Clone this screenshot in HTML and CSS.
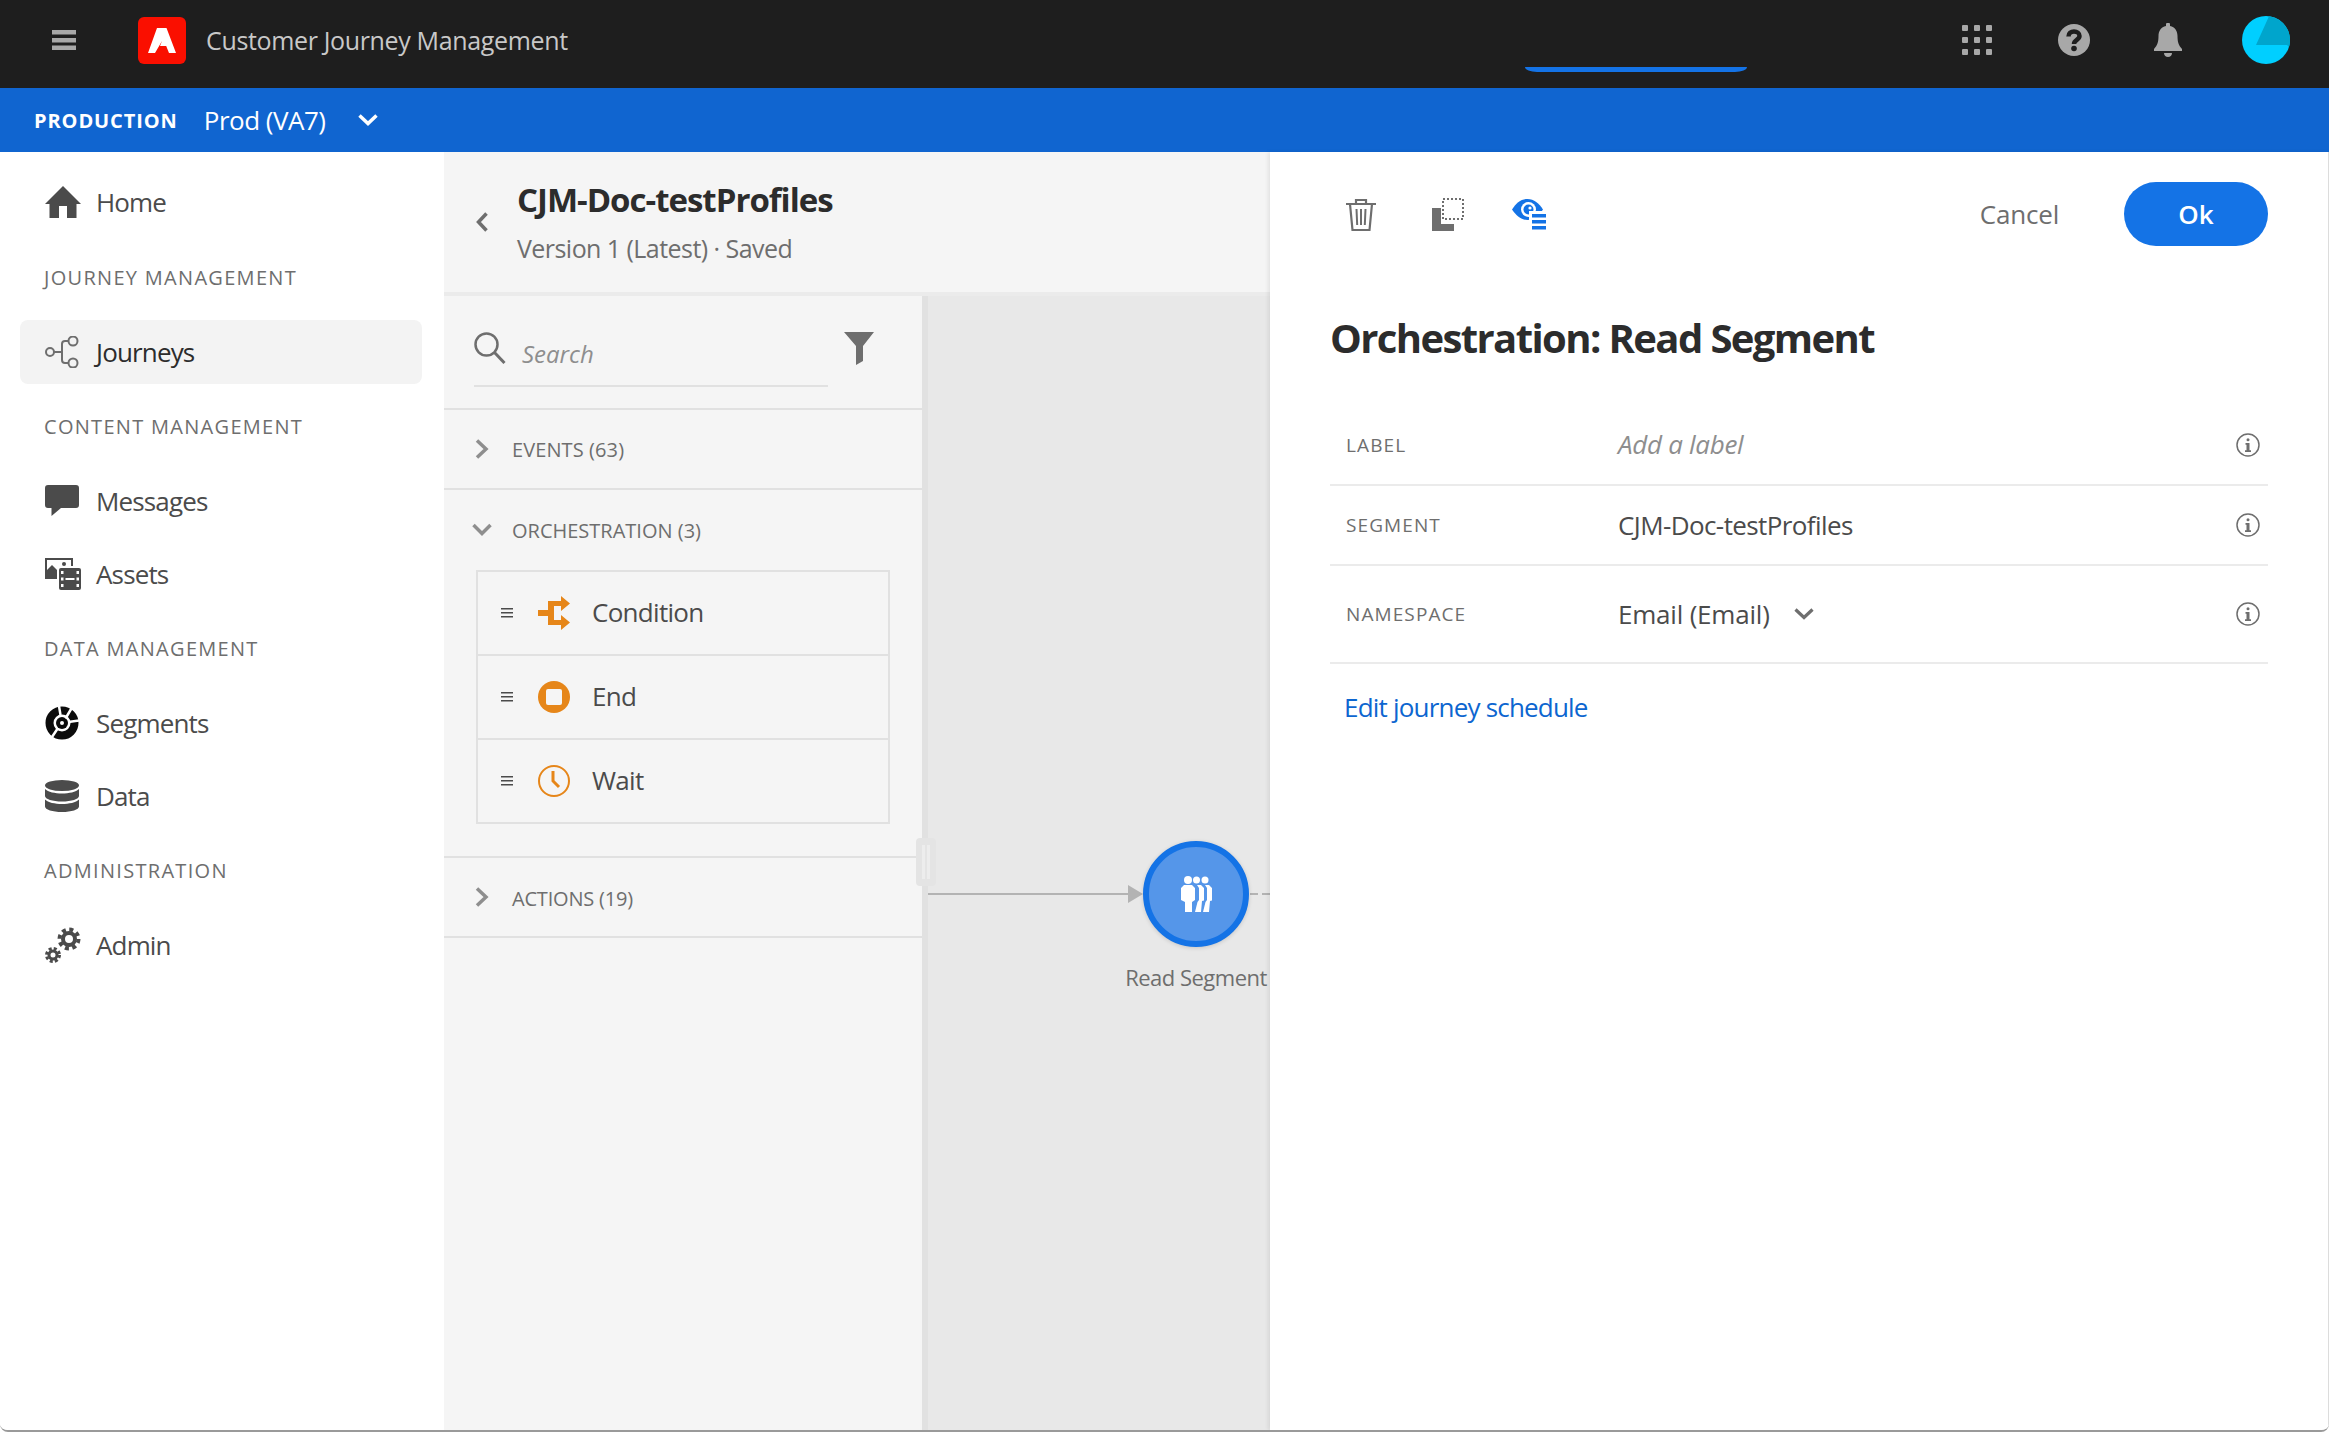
FILE: index.html
```html
<!DOCTYPE html>
<html lang="en">
<head>
  <meta charset="UTF-8" />
  <title>Customer Journey Management</title>
  <link rel="stylesheet" href="styles.css">
</head>
<body>
<div class="app">

  <header class="topbar">
    <svg class="burger" width="24" height="20" viewBox="0 0 24 20"><path fill="#a8a8a8" d="M0 0h24v4.500H0zM0 8h24v4.500H0zM0 15.500h24V20H0z"/></svg>
    <svg class="logo" width="48" height="47" viewBox="0 0 48 47">
      <rect width="48" height="47" rx="6" fill="#fa0f00"/>
      <path fill="#fff" d="M19 11h9.500L38 36h-7l-2.800-7H22l2-5-7 12h-7z"/>
    </svg>
    <span class="app-name">Customer Journey Management</span>
    <div class="top-icons">
      <svg width="30" height="30" viewBox="0 0 30 30" fill="#a8a8a8">
        <rect width="6" height="6" rx="1"/><rect x="12" width="6" height="6" rx="1"/><rect x="24" width="6" height="6" rx="1"/>
        <rect y="12" width="6" height="6" rx="1"/><rect x="12" y="12" width="6" height="6" rx="1"/><rect x="24" y="12" width="6" height="6" rx="1"/>
        <rect y="24" width="6" height="6" rx="1"/><rect x="12" y="24" width="6" height="6" rx="1"/><rect x="24" y="24" width="6" height="6" rx="1"/>
      </svg>
      <svg width="32" height="32" viewBox="0 0 32 32">
        <circle cx="16" cy="16" r="16" fill="#a8a8a8"/>
        <path fill="none" stroke="#1e1e1e" stroke-width="4.500" d="M10.500 12.500c0-3.200 2.400-5 5.500-5s5.500 1.700 5.500 4.600c0 3.800-5.500 3.900-5.500 7.900"/>
        <circle cx="16" cy="24.500" r="2.800" fill="#1e1e1e"/>
      </svg>
      <svg width="28" height="34" viewBox="0 0 28 34" fill="#a8a8a8">
        <path d="M12 3V1.500a2 2 0 0 1 4 0V3c5 1 7.500 5 7.500 10 0 6 1 9 4.500 13v2H0v-2c3.500-4 4.500-7 4.500-13 0-5 2.500-9 7.500-10z"/>
        <path d="M10 30h8c0 2.500-1.800 4-4 4s-4-1.500-4-4z"/>
      </svg>
      <svg class="avatar" width="48" height="48" viewBox="0 0 48 48">
        <circle cx="24" cy="24" r="24" fill="#00cfff"/>
        <path fill="#00a5cc" d="M27 0.200A24 24 0 0 1 47 31L45 29H14z"/>
      </svg>
    </div>
  </header>

  <div class="envbar">
    <span class="env-label">PRODUCTION</span>
    <span class="env-name">Prod (VA7)</span>
    <svg width="20" height="12" viewBox="0 0 20 12"><path fill="none" stroke="#fff" stroke-width="3.500" d="M1.500 1.500 10 9.500l8.500-8"/></svg>
  </div>

  <div class="main">

    <nav class="sidebar">
      <div class="nav-group">
        <a class="nav-item">
          <svg class="nav-icon" width="36" height="32" viewBox="0 0 36 32" fill="#4b4b4b"><path d="M18 0 36 18h-4.500v14H22V20h-8v12H4.500V18H0z"/></svg>
          Home
        </a>
      </div>
      <div class="nav-heading">JOURNEY MANAGEMENT</div>
      <div class="nav-group">
        <a class="nav-item active">
          <svg class="nav-icon" width="34" height="32" viewBox="0 0 34 32" fill="none" stroke="#6e6e6e" stroke-width="2">
            <circle cx="5" cy="16" r="4"/><circle cx="28" cy="5" r="4.500"/><circle cx="28" cy="27" r="4.500"/>
            <path d="M9 16h7M23.500 5H20a3 3 0 0 0-3 3v16a3 3 0 0 0 3 3h3.500"/>
          </svg>
          Journeys
        </a>
      </div>
      <div class="nav-heading">CONTENT MANAGEMENT</div>
      <div class="nav-group">
        <a class="nav-item">
          <svg class="nav-icon" width="34" height="32" viewBox="0 0 34 32" fill="#4b4b4b"><path d="M3 0h28a3 3 0 0 1 3 3v17a3 3 0 0 1-3 3H16L6.500 31v-8H3a3 3 0 0 1-3-3V3a3 3 0 0 1 3-3z"/></svg>
          Messages
        </a>
        <a class="nav-item">
          <svg class="nav-icon" width="36" height="32" viewBox="0 0 36 32">
            <rect x="1" y="1" width="26" height="19" fill="none" stroke="#4b4b4b" stroke-width="2"/>
            <path fill="#4b4b4b" d="M2 20v-8l5-5 7 7v6z"/>
            <circle cx="19" cy="6" r="2" fill="#4b4b4b"/>
            <rect x="12" y="8" width="24" height="24" fill="#fff"/>
            <rect x="14" y="10" width="22" height="22" rx="2" fill="#4b4b4b"/>
            <path fill="#fff" d="M16 13h2.500v3H16zM16 19.500h2.500v3H16zM16 26h2.500v3H16zM31.500 13H34v3h-2.500zM31.500 19.500H34v3h-2.500zM31.500 26H34v3h-2.500zM20.500 20h9v2h-9z"/>
          </svg>
          Assets
        </a>
      </div>
      <div class="nav-heading">DATA MANAGEMENT</div>
      <div class="nav-group">
        <a class="nav-item">
          <svg class="nav-icon" width="34" height="34" viewBox="0 0 34 34">
            <circle cx="17" cy="17" r="12.500" fill="none" stroke="#0c0c0c" stroke-width="8"/>
            <circle cx="17" cy="17" r="6" fill="#0c0c0c"/>
            <circle cx="17" cy="17" r="2" fill="#fff"/>
            <path fill="none" stroke="#fff" stroke-width="2.500" d="M20.500 12.500 27 1.500M23.500 16 34 14.500M13 22 6 32.500M15.500 9 14 0"/>
          </svg>
          Segments
        </a>
        <a class="nav-item">
          <svg class="nav-icon" width="34" height="32" viewBox="0 0 34 32" fill="#4b4b4b">
            <ellipse cx="17" cy="5.500" rx="17" ry="5.500"/>
            <path d="M0 9c3 3 10 4.500 17 4.500S31 12 34 9v7c0 3-7.500 5.500-17 5.500S0 19 0 16z"/>
            <path d="M0 19.500c3 3 10 4.500 17 4.500s14-1.500 17-4.500v7C34 29.500 26.500 32 17 32S0 29.500 0 26.500z"/>
          </svg>
          Data
        </a>
      </div>
      <div class="nav-heading">ADMINISTRATION</div>
      <div class="nav-group">
        <a class="nav-item">
          <svg class="nav-icon" width="36" height="36" viewBox="0 0 36 36" fill="none" stroke="#4b4b4b">
            <circle cx="24" cy="12" r="6" stroke-width="4"/>
            <circle cx="24" cy="12" r="9.500" stroke-width="4" stroke-dasharray="4 3.460"/>
            <circle cx="8" cy="28" r="4" stroke-width="3"/>
            <circle cx="8" cy="28" r="6.500" stroke-width="3" stroke-dasharray="3 2.100"/>
          </svg>
          Admin
        </a>
      </div>
    </nav>

    <section class="editor">
      <div class="editor-head">
        <svg class="back" width="12" height="20" viewBox="0 0 12 20"><path fill="none" stroke="#6e6e6e" stroke-width="3.500" d="M10.500 1.500 2.500 10l8 8.500"/></svg>
        <div>
          <div class="journey-name">CJM-Doc-testProfiles</div>
          <div class="journey-version">Version 1 (Latest) · Saved</div>
        </div>
      </div>

      <div class="editor-body">
        <aside class="palette">
          <div class="search-row">
            <div class="search-box">
              <svg width="32" height="32" viewBox="0 0 32 32" fill="none" stroke="#6e6e6e" stroke-width="2.500"><circle cx="12.500" cy="12.500" r="11"/><path stroke-width="3" d="m20.500 20.500 10 10.500"/></svg>
              <span class="search-text">Search</span>
            </div>
            <svg class="filter" width="30" height="33" viewBox="0 0 30 33"><path fill="#6e6e6e" d="M0 0h30L19 14v15l-7 4V14z"/></svg>
          </div>

          <div class="section-row">
            <svg class="sec-chev" width="14" height="20" viewBox="0 0 14 20"><path fill="none" stroke="#8e8e8e" stroke-width="3.500" d="m2 1.500 9 8.500-9 8.500"/></svg>
            EVENTS (63)
          </div>

          <div class="section-open">
            <div class="section-title">
              <svg class="sec-chev" width="20" height="14" viewBox="0 0 20 14"><path fill="none" stroke="#8e8e8e" stroke-width="3.500" d="m1.500 2 8.500 8.500L18.500 2"/></svg>
              ORCHESTRATION (3)
            </div>
            <div class="activity-box">
              <div class="activity">
                <svg class="grip-lines" width="12" height="10" viewBox="0 0 12 10"><path fill="#4b4b4b" d="M0 0h12v1.500H0zM0 4h12v1.500H0zM0 8h12v1.500H0z"/></svg>
                <svg width="32" height="34" viewBox="0 0 32 34" fill="#e68619"><path d="M0 14h10V5h13V0l9 7.500-9 7.500v-5h-7v14h7v-5l9 7.500-9 7.500v-5H10V20H0z"/></svg>
                <span>Condition</span>
              </div>
              <div class="activity">
                <svg class="grip-lines" width="12" height="10" viewBox="0 0 12 10"><path fill="#4b4b4b" d="M0 0h12v1.500H0zM0 4h12v1.500H0zM0 8h12v1.500H0z"/></svg>
                <svg width="32" height="32" viewBox="0 0 32 32"><circle cx="16" cy="16" r="16" fill="#e68619"/><rect x="8" y="8" width="16" height="16" rx="2" fill="#f5f5f5"/></svg>
                <span>End</span>
              </div>
              <div class="activity">
                <svg class="grip-lines" width="12" height="10" viewBox="0 0 12 10"><path fill="#4b4b4b" d="M0 0h12v1.500H0zM0 4h12v1.500H0zM0 8h12v1.500H0z"/></svg>
                <svg width="32" height="32" viewBox="0 0 32 32" fill="none" stroke="#e68619"><circle cx="16" cy="16" r="15" stroke-width="2"/><path stroke-width="3" d="M15 6v10l6 6"/></svg>
                <span>Wait</span>
              </div>
            </div>
          </div>

          <div class="section-row actions-row">
            <svg class="sec-chev" width="14" height="20" viewBox="0 0 14 20"><path fill="none" stroke="#8e8e8e" stroke-width="3.500" d="m2 1.500 9 8.500-9 8.500"/></svg>
            ACTIONS (19)
          </div>
        </aside>

        <div class="scroller"></div>

        <div class="canvas">
          <div class="drag-handle"><i></i><i></i></div>
          <div class="edge"></div>
          <div class="arrow"></div>
          <div class="dash"></div>
          <div class="node">
            <div class="node-circle">
              <svg width="31" height="36" viewBox="0 0 31 36" fill="#fff">
                <circle cx="7" cy="4" r="4"/><path d="M0 12l3-3h8l3 3v12l-3 2v10H4V26l-4-2z"/>
                <circle cx="15.500" cy="4" r="3.500"/><path d="M16 9h4l3 3v12.500l-2 .5-1 11h-6l2.500-10 1.500-2V12z"/>
                <circle cx="24" cy="4" r="3.500"/><path d="M24 9h4l3 3v12.500l-2 .5-1 11h-6l2.500-10 1.500-2V12z"/>
              </svg>
            </div>
            <div class="node-label">Read Segment</div>
          </div>
        </div>
      </div>
    </section>

    <section class="inspector">
      <div class="toolbar">
        <svg class="tool trash" width="30" height="33" viewBox="0 0 30 33" fill="none" stroke="#6e6e6e" stroke-width="2.200">
          <path d="M0 6h30M10 6V2h10v4M4 6l2.500 26h17L26 6"/>
          <path stroke-width="2" d="M10.500 11l.7 16M15 11v16M19.500 11l-.7 16"/>
        </svg>
        <svg class="tool copy" width="32" height="33" viewBox="0 0 32 33">
          <path fill="#6e6e6e" d="M0 10h9v16h13v7H0z"/>
          <rect x="11" y="1" width="20" height="20" fill="none" stroke="#6e6e6e" stroke-width="2" stroke-dasharray="2 2"/>
        </svg>
        <svg class="tool eye" width="35" height="31" viewBox="0 0 35 31">
          <path fill="#1473e6" d="M15.500 0C9 0 4 4.500 0 10.500 4 16.500 9 21 15.500 21s11.500-4.500 15.500-10.500C27 4.500 22 0 15.500 0z"/>
          <circle cx="16.500" cy="10.500" r="7.500" fill="#fff"/>
          <circle cx="16.500" cy="10.500" r="5" fill="#1473e6"/>
          <circle cx="18" cy="9" r="1.600" fill="#fff"/>
          <rect x="17" y="12" width="18" height="19" fill="#fff"/>
          <path fill="#1473e6" d="M20 15h14v3.500H20zM20 21h14v3.500H20zM20 27h14v3.500H20z"/>
        </svg>
        <span class="cancel">Cancel</span>
        <button class="ok" type="button">Ok</button>
      </div>

      <h2 class="inspector-title">Orchestration: Read Segment</h2>

      <div class="field">
        <span class="field-label">LABEL</span>
        <span class="field-value placeholder">Add a label</span>
        <svg class="info" width="24" height="24" viewBox="0 0 24 24"><use href="#info"/></svg>
      </div>
      <div class="field">
        <span class="field-label">SEGMENT</span>
        <span class="field-value value-tight">CJM-Doc-testProfiles</span>
        <svg class="info" width="24" height="24" viewBox="0 0 24 24"><use href="#info"/></svg>
      </div>
      <div class="field field-tall">
        <span class="field-label">NAMESPACE</span>
        <span class="field-value">Email (Email)
          <svg class="select-chev" width="20" height="12" viewBox="0 0 20 12"><path fill="none" stroke="#6e6e6e" stroke-width="3.200" d="M1.500 1.500 10 9.500l8.500-8"/></svg>
        </span>
        <svg class="info" width="24" height="24" viewBox="0 0 24 24"><use href="#info"/></svg>
      </div>

      <a class="schedule-link">Edit journey schedule</a>
    </section>
  </div>
</div>

<svg width="0" height="0" class="defs">
  <symbol id="info" viewBox="0 0 24 24">
    <circle cx="12" cy="12" r="11" fill="none" stroke="#6e6e6e" stroke-width="1.500"/>
    <circle cx="12" cy="6.800" r="1.500" fill="#6e6e6e"/>
    <path fill="#6e6e6e" d="M9.500 10h4v7.200h1.500V19H9v-1.800h1.500v-5.400h-1z"/>
  </symbol>
</svg>
</body>
</html>
```

FILE: styles.css
```css
* {
  box-sizing: border-box;
}
html, body {
  margin: 0;
  height: 100%;
  overflow: hidden;
}
body {
  font-family: "Open Sans", "Noto Sans", Arial, sans-serif;
  color: #4b4b4b;
  background: #fff;
}
svg {
  display: block;
  flex: none;
}
.defs {
  position: absolute;
}
.app {
  height: 1432px;
  display: flex;
  flex-direction: column;
  overflow: hidden;
  border-bottom: 2px solid #9a9a9a;
  border-radius: 0 0 8px 8px;
}

/* top bars */
.topbar {
  height: 88px;
  flex: none;
  background: #1e1e1e;
  display: flex;
  align-items: center;
  padding: 0 0 8px 52px;
  position: relative;
}
.topbar::after {
  content: "";
  position: absolute;
  left: 1525px;
  width: 222px;
  bottom: 16px;
  height: 5px;
  background: #1473e6;
  border-radius: 0 0 12px 12px / 0 0 5px 5px;
}
.logo {
  margin-left: 62px;
}
.app-name {
  margin-left: 20px;
  font-size: 25px;
  color: #c8c8c8;
  letter-spacing: -0.35px;
}
.top-icons {
  margin-left: auto;
  display: flex;
  align-items: center;
  gap: 64px;
  padding-right: 39px;
}
.top-icons svg:first-child {
  margin-right: 2px;
}
.top-icons .avatar {
  margin-left: -4px;
}
.envbar {
  height: 64px;
  flex: none;
  background: #1065d0;
  color: #fff;
  display: flex;
  align-items: center;
  padding-left: 34px;
}
.env-label {
  font-size: 20px;
  font-weight: 700;
  letter-spacing: 0.9px;
}
.env-name {
  margin-left: 26px;
  margin-right: 33px;
  font-size: 26px;
  letter-spacing: -0.5px;
}

.main {
  flex: 1;
  min-height: 0;
  display: flex;
}

/* left nav */
.sidebar {
  width: 444px;
  flex: none;
  padding: 18px 22px 0 20px;
  background: #fff;
}
.nav-group {
  display: flex;
  flex-direction: column;
  gap: 9px;
}
.nav-item {
  height: 64px;
  display: flex;
  align-items: center;
  border-radius: 8px;
  font-size: 26px;
  letter-spacing: -0.85px;
  color: #4b4b4b;
  position: relative;
  padding-left: 76px;
}
.nav-item.active {
  background: #f3f3f3;
  color: #2c2c2c;
}
.nav-icon {
  position: absolute;
  left: 25px;
  top: 50%;
  transform: translateY(-50%);
}
.nav-heading {
  height: 85px;
  display: flex;
  align-items: center;
  padding-left: 24px;
  font-size: 20px;
  letter-spacing: 1.3px;
  color: #6e6e6e;
}
.nav-group:first-child + .nav-heading {
  height: 86px;
}

/* journey editor */
.editor {
  flex: 1;
  min-width: 0;
  display: flex;
  flex-direction: column;
}
.editor-head {
  height: 144px;
  flex: none;
  background: #f5f5f5;
  border-bottom: 4px solid #ebebeb;
  display: flex;
  align-items: center;
  padding-left: 32px;
  gap: 29px;
}
.journey-name {
  font-size: 33px;
  font-weight: 700;
  color: #2c2c2c;
  letter-spacing: -1px;
  line-height: 44px;
  margin-top: -2px;
}
.journey-version {
  margin-top: 9px;
  font-size: 25px;
  color: #6e6e6e;
  line-height: 34px;
  letter-spacing: -0.55px;
}
.editor-body {
  flex: 1;
  min-height: 0;
  display: flex;
}
.palette {
  width: 478px;
  flex: none;
  background: #f5f5f5;
  display: flex;
  flex-direction: column;
}
.scroller {
  width: 6px;
  flex: none;
  background: #e1e1e1;
}
.search-row {
  height: 114px;
  flex: none;
  border-bottom: 2px solid #e1e1e1;
  display: flex;
  padding: 36px 0 0 30px;
}
.search-box {
  width: 354px;
  height: 55px;
  border-bottom: 2px solid #e1e1e1;
  display: flex;
  gap: 16px;
}
.search-text {
  font-size: 24px;
  font-style: italic;
  color: #8e8e8e;
  margin-top: 5px;
}
.filter {
  margin-left: 16px;
}
.section-row {
  height: 80px;
  flex: none;
  border-bottom: 2px solid #e1e1e1;
  display: flex;
  align-items: center;
  font-size: 20px;
  letter-spacing: 0.1px;
  color: #6e6e6e;
  padding-left: 68px;
  position: relative;
}
.actions-row {
  border-top: 2px solid #e1e1e1;
  height: 82px;
  padding-top: 2px;
  letter-spacing: -0.2px;
}
.sec-chev {
  position: absolute;
  left: 31px;
  top: 50%;
  transform: translateY(-50%);
}
.section-title .sec-chev {
  left: 28px;
}
.section-open {
  padding: 0 32px 32px;
}
.section-title {
  height: 80px;
  display: flex;
  align-items: center;
  font-size: 20px;
  color: #6e6e6e;
  padding-left: 68px;
  margin: 0 -32px;
  position: relative;
}
.activity-box {
  border: 2px solid #e1e1e1;
  height: 254px;
  display: flex;
  flex-direction: column;
}
.activity {
  flex: 1;
  display: flex;
  align-items: center;
  padding-left: 23px;
  font-size: 26px;
  letter-spacing: -0.7px;
  color: #4b4b4b;
  border-bottom: 2px solid #e1e1e1;
}
.activity:last-child {
  border-bottom: 0;
}
.grip-lines {
  margin-right: 25px;
}
.activity span {
  margin: -2px 0 0 22px;
}

/* canvas */
.canvas {
  flex: 1;
  min-width: 0;
  background: #e8e8e8;
  position: relative;
}
.drag-handle {
  position: absolute;
  left: -12px;
  top: 542px;
  width: 20px;
  height: 48px;
  background: #e4e4e4;
  border-radius: 4px;
  display: flex;
  justify-content: center;
  gap: 2px;
  padding: 7px 0;
}
.drag-handle i {
  width: 3px;
  background: #ededed;
}
.edge {
  position: absolute;
  left: 0;
  top: 597px;
  width: 200px;
  height: 2px;
  background: #b3b3b3;
}
.arrow {
  position: absolute;
  left: 200px;
  top: 589px;
  border-left: 15px solid #b3b3b3;
  border-top: 9px solid transparent;
  border-bottom: 9px solid transparent;
}
.dash {
  position: absolute;
  left: 322px;
  top: 597px;
  width: 20px;
  height: 2px;
  background: repeating-linear-gradient(90deg, #b3b3b3 0 8px, transparent 8px 12px);
}
.node {
  position: absolute;
  left: 195px;
  top: 545px;
  width: 146px;
  display: flex;
  flex-direction: column;
  align-items: center;
}
.node-circle {
  width: 106px;
  height: 106px;
  border-radius: 50%;
  border: 6px solid #1473e6;
  background: #5596e9;
  box-shadow: 0 1px 4px rgba(0, 0, 0, 0.15);
  display: flex;
  align-items: center;
  justify-content: center;
}
.node-label {
  margin-top: 14px;
  font-size: 22px;
  letter-spacing: -0.5px;
  line-height: 32px;
  color: #6e6e6e;
  white-space: nowrap;
}

/* right panel */
.inspector {
  width: 1059px;
  flex: none;
  background: #fff;
  padding: 30px 60px 0 60px;
  border-right: 1px solid #dcdcdc;
  box-shadow: -2px 0 4px rgba(0, 0, 0, 0.08);
  position: relative;
}
.toolbar {
  height: 64px;
  display: flex;
  align-items: center;
}
.tool.trash {
  margin-left: 16px;
}
.tool.copy {
  margin-left: 56px;
}
.tool.eye {
  margin-left: 48px;
}
.cancel {
  margin-left: auto;
  font-size: 26px;
  letter-spacing: -0.2px;
  color: #6e6e6e;
}
.ok {
  margin-left: 65px;
  width: 144px;
  height: 64px;
  border: 0;
  border-radius: 32px;
  background: #1473e6;
  color: #fff;
  font-family: inherit;
  font-size: 26px;
  font-weight: 600;
}
.inspector-title {
  margin: 67px 0 43px;
  font-size: 40px;
  line-height: 50px;
  font-weight: 700;
  color: #2c2c2c;
  letter-spacing: -1.6px;
}
.field {
  height: 80px;
  border-bottom: 2px solid #ebebeb;
  display: flex;
  align-items: center;
  padding: 0 8px 0 16px;
}
.field-tall {
  height: 98px;
}
.field-label {
  width: 272px;
  flex: none;
  font-size: 19px;
  letter-spacing: 1.1px;
  color: #6e6e6e;
}
.field-value {
  flex: 1;
  display: flex;
  align-items: center;
  font-size: 26px;
  color: #4b4b4b;
  letter-spacing: -0.2px;
}
.value-tight {
  letter-spacing: -0.6px;
}
.placeholder {
  font-style: italic;
  color: #8e8e8e;
  letter-spacing: -0.3px;
  margin-top: -2px;
}
.select-chev {
  margin-left: 24px;
}
.schedule-link {
  display: block;
  margin: 25px 0 0 14px;
  font-size: 26px;
  letter-spacing: -0.8px;
  line-height: 36px;
  color: #0d66d0;
}
```
